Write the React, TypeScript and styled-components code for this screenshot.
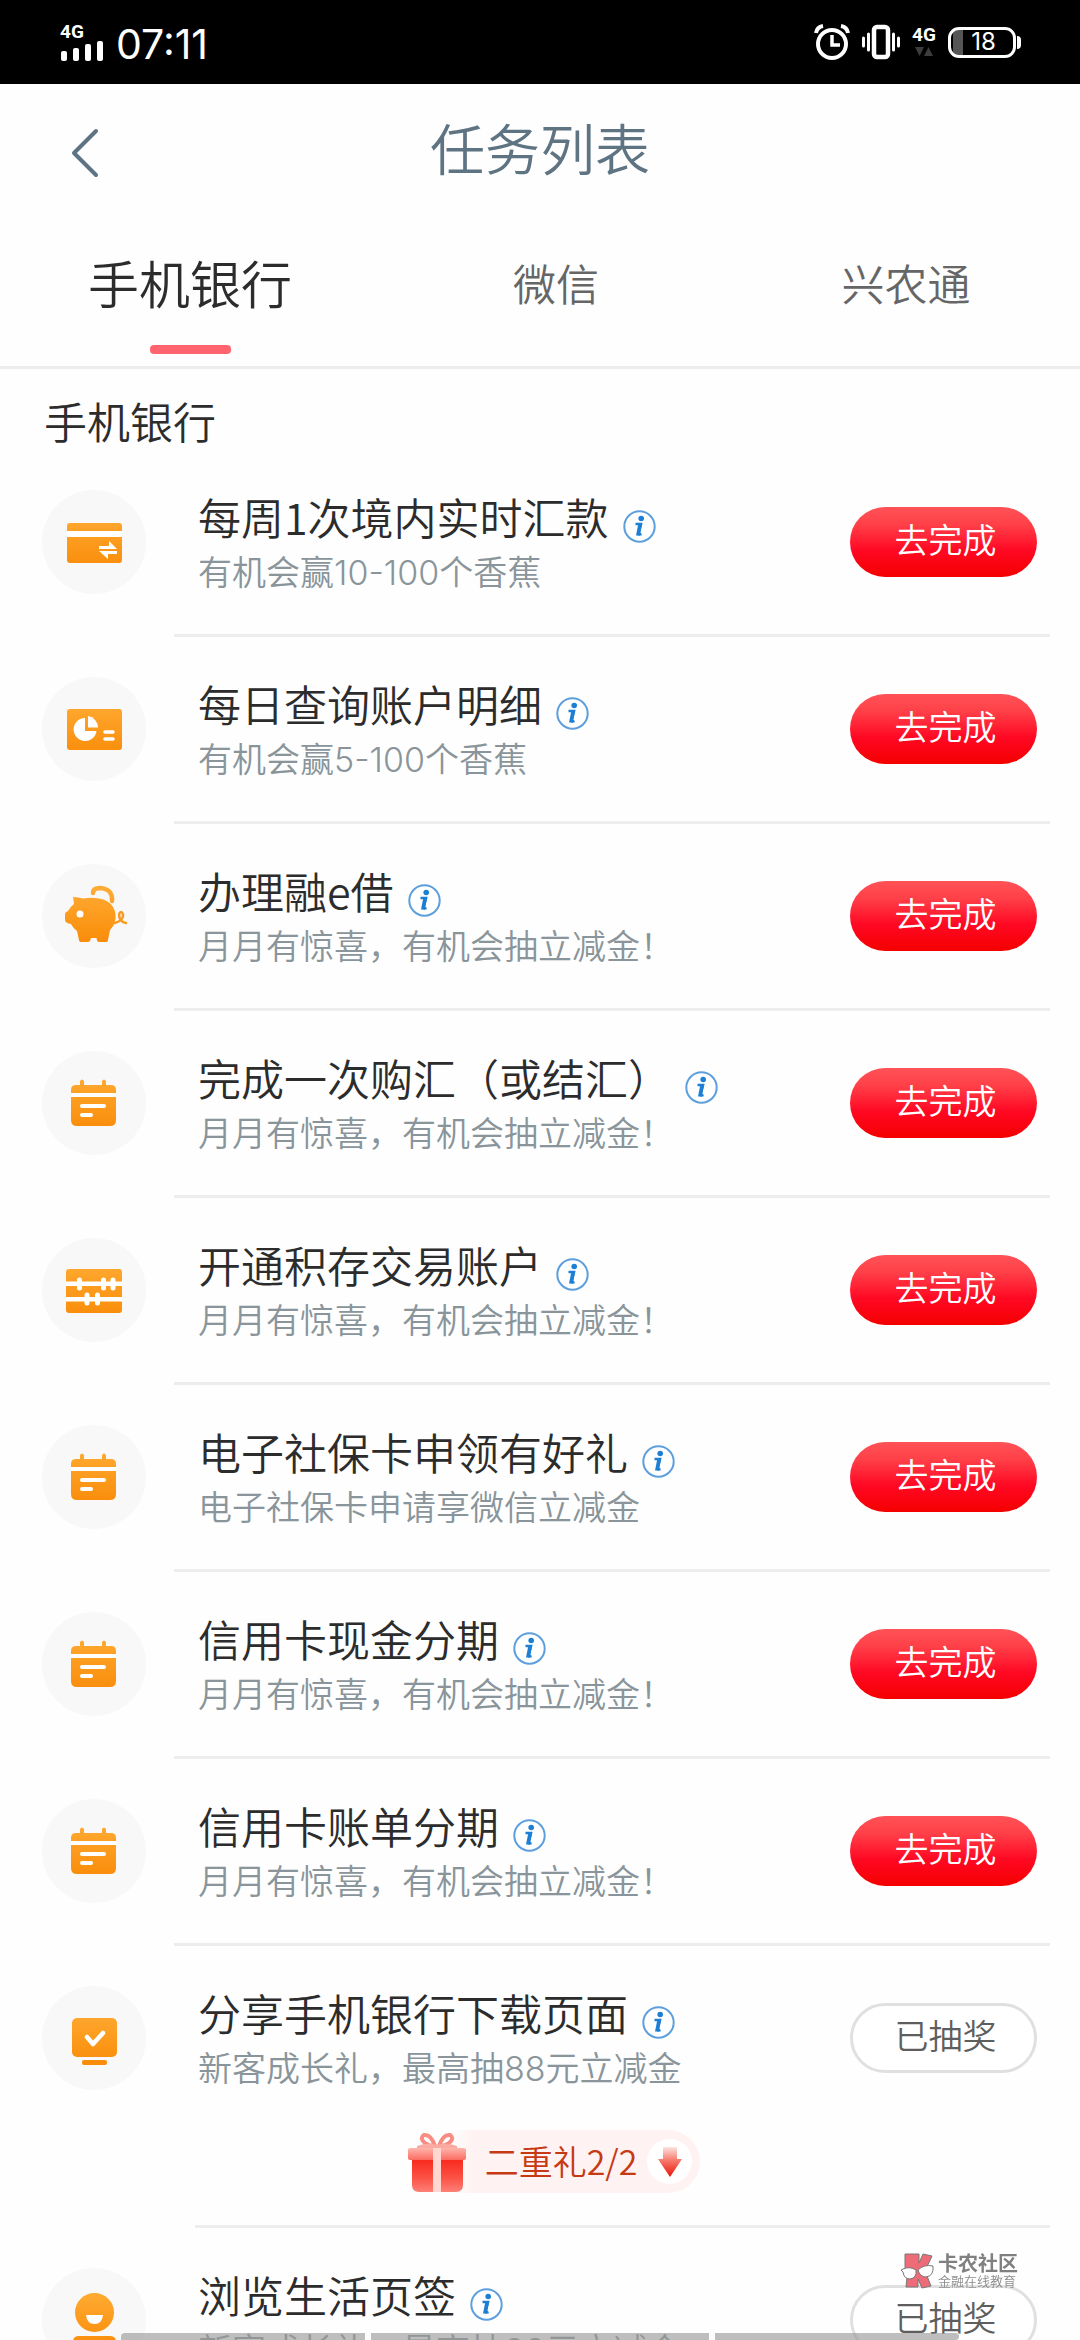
import React from "react";
import styled, { createGlobalStyle, css } from "styled-components";

const cjk = `"Noto Sans CJK SC", "Noto Sans", sans-serif`;

const GlobalStyle = createGlobalStyle`
  *, *::before, *::after { box-sizing: border-box; }
  body { margin: 0; background: #fefefe; }
  button { font: inherit; border: 0; background: none; padding: 0; cursor: pointer; }
  h1, h2, h3, p, ul { margin: 0; padding: 0; font-weight: inherit; }
  svg { display: block; flex: none; }
`;

const Screen = styled.div`
  height: 100vh;
  overflow: hidden;
  font-family: ${cjk};
  font-weight: 350;
  color: #2c2c2c;
  background: #fefefe;
`;

/* ---------- status bar ---------- */

const StatusBar = styled.div`
  display: flex;
  justify-content: space-between;
  align-items: center;
  height: 84px;
  padding: 0 59px 0 60px;
  background: #000;
  color: #fff;
`;

const StatusGroup = styled.div<{ $gap: number }>`
  display: flex;
  align-items: center;
  gap: ${(p) => p.$gap}px;
`;

const SignalColumn = styled.div`
  display: flex;
  flex-direction: column;
`;

const NetworkLabel = styled.span`
  font: 700 19px/16px Roboto, sans-serif;
`;

const Clock = styled.time`
  font: 400 41px/48px Inter, sans-serif;
  padding-top: 4px;
`;

const Battery = styled.div`
  display: flex;
  align-items: center;
  gap: 1px;
`;

const BatteryShell = styled.div`
  display: flex;
  align-items: center;
  justify-content: center;
  width: 68px;
  height: 31px;
  padding-left: 3px;
  border: 3px solid #fff;
  border-radius: 11px;
  background: linear-gradient(90deg, #000 2px, #555 2px, #555 12px, #000 12px);
  font: 400 24px/24px Inter, sans-serif;
`;

const BatteryNub = styled.div`
  width: 4px;
  height: 13px;
  border-radius: 0 4px 4px 0;
  background: #fff;
`;

/* ---------- header ---------- */

const Header = styled.header`
  display: grid;
  grid-template-columns: 170px 1fr 170px;
  align-items: center;
  height: 132px;
`;

const BackButton = styled.button`
  display: flex;
  padding: 6px 0 0 70px;
  height: 60px;
  align-items: center;
`;

const PageTitle = styled.h1`
  padding-bottom: 8px;
  font-size: 55px;
  line-height: 72px;
  text-align: center;
  color: #5f7482;
`;

const Tabs = styled.nav`
  display: grid;
  grid-template-columns: 95fr 88fr 87fr;
  height: 153px;
  border-bottom: 3px solid #ededed;
`;

const Tab = styled.button<{ $active?: boolean }>`
  display: flex;
  flex-direction: column;
  align-items: center;
  gap: 33px;
  padding-top: 36px;
  font-size: ${(p) => (p.$active ? 51 : 43)}px;
  line-height: 60px;
  color: ${(p) => (p.$active ? "#2c2c2c" : "#666")};
  &::after {
    content: "";
    width: 81px;
    height: 9px;
    border-radius: 4px;
    background: ${(p) => (p.$active ? "#ff646f" : "transparent")};
  }
`;

/* ---------- task list ---------- */

const SectionTitle = styled.h2`
  padding: 24px 44px 3px;
  font-size: 43px;
  line-height: 54px;
`;

const TaskList = styled.ul`
  list-style: none;
`;

const TaskMain = styled.div`
  display: flex;
  align-items: center;
  gap: 52px;
  height: 184px;
  padding: 0 43px 0 42px;
`;

const IconDisc = styled.div`
  flex: none;
  width: 104px;
  height: 104px;
  border-radius: 50%;
  background: #f8f8f8;
`;

const TaskText = styled.div`
  flex: 1;
  min-width: 0;
`;

const TitleLine = styled.div`
  display: flex;
  align-items: center;
  gap: 14px;
`;

const TaskTitle = styled.h3`
  font-size: 43px;
  line-height: 60px;
  white-space: nowrap;
`;

const InfoButton = styled.button`
  margin-top: 22px;
`;

const TaskNote = styled.p`
  margin-top: 1px;
  font-family: Inter, ${cjk};
  font-size: 34px;
  line-height: 52px;
  color: #89959a;
  white-space: nowrap;
`;

const ActionButton = styled.button<{ $done?: boolean }>`
  display: flex;
  flex: none;
  align-items: center;
  justify-content: center;
  width: 187px;
  height: 70px;
  padding: 0 0 6px 4px;
  border-radius: 35px;
  font-size: 34px;
  line-height: 50px;
  ${(p) =>
    p.$done
      ? css`
          color: #5e5e5e;
          border: 3px solid #e0e0e0;
          background: #fff;
        `
      : css`
          color: #fff;
          background: linear-gradient(#ff5257, #ff4048 25%, #ff0824 62%, #f40000);
        `}
`;

const Divider = styled.div<{ $inset: number }>`
  height: 3px;
  margin: 0 30px 0 ${(p) => p.$inset}px;
  background: #ededed;
`;

const BonusRow = styled.div`
  display: flex;
  justify-content: center;
  padding: 0 0 32px 28px;
`;

const BonusPill = styled.button`
  display: flex;
  align-items: center;
  height: 63px;
  padding-right: 8px;
  border-radius: 0 32px 32px 0;
  background: linear-gradient(90deg, transparent 15%, #fff2f2 22%);
  font-size: 34px;
  line-height: 60px;
  color: #c53a12;
`;

const BonusLabel = styled.span`
  padding: 0 10px 2px 19px;
`;

const BonusArrow = styled.span`
  display: grid;
  place-items: center;
  width: 45px;
  height: 45px;
  border-radius: 50%;
  background: #fff;
`;

/* ---------- overlays ---------- */

const Watermark = styled.div`
  position: fixed;
  right: 62px;
  bottom: 51px;
  display: flex;
  align-items: center;
  gap: 4px;
  color: #808080;
`;

const WatermarkName = styled.div`
  font-size: 20px;
  line-height: 20px;
  font-weight: 700;
`;

const WatermarkTag = styled.div`
  font-size: 13px;
  line-height: 16px;
  color: #8c8c8c;
`;

const NavHints = styled.div`
  position: fixed;
  left: 0;
  right: 0;
  bottom: 0;
  display: grid;
  grid-template-columns: 244fr 338fr 244fr;
  gap: 6px;
  height: 7px;
  padding: 0 121px;
`;

const NavHint = styled.div`
  background: rgba(150, 150, 150, 0.62);
  &:first-child { border-top-left-radius: 4px; }
  &:last-child { border-radius: 0 4px 4px 0; }
`;

/* ---------- drawings ---------- */

const AlarmIcon = () => (
  <svg width="36" height="36" viewBox="0 0 36 36" fill="none" stroke="#fff">
    <circle cx="18" cy="20" r="14" strokeWidth="4" />
    <path d="M2 9Q3 3 9 2M34 9Q33 3 27 2" strokeWidth="4" />
    <path d="M18 11V21H26" strokeWidth="3.5" />
  </svg>
);

const VibrateIcon = () => (
  <svg width="38" height="36" viewBox="0 0 38 36" fill="none" stroke="#fff" strokeLinecap="round">
    <rect x="12" y="3" width="14" height="30" rx="3" strokeWidth="4.5" />
    <path d="M6.500 10V26M31.500 10V26M1.500 14V22M36.500 14V22" strokeWidth="3" />
  </svg>
);

const SignalBars = () => (
  <svg width="44" height="21" viewBox="0 0 44 21" fill="#fff">
    <rect x="1" y="11" width="6" height="10" rx="2" />
    <rect x="13" y="8" width="6" height="13" rx="2" />
    <rect x="25" y="4" width="6" height="17" rx="2" />
    <rect x="37" y="1" width="6" height="20" rx="2" />
  </svg>
);

const DataArrows = () => (
  <svg width="24" height="14" viewBox="0 0 24 14" fill="#3c3c3c">
    <path d="M3 4H12L7.500 13ZM12 13H21L16.500 4Z" />
  </svg>
);

const BackIcon = () => (
  <svg width="30" height="50" viewBox="0 0 30 50" fill="none" stroke="#5f7482" strokeWidth="4" strokeLinecap="round" strokeLinejoin="round">
    <path d="M26 3L4 25L26 47" />
  </svg>
);

const InfoIcon = () => (
  <svg width="33" height="33" viewBox="0 0 33 33">
    <circle cx="16.5" cy="16.5" r="15.2" fill="#fff" stroke="#5c9fdc" strokeWidth="2" />
    <circle cx="18.2" cy="8.500" r="2.800" fill="#1c7fd4" />
    <path d="M12.500 14H18L15.600 23.500Q15.500 25 18.500 24" fill="none" stroke="#1c7fd4" strokeWidth="2.600" />
    <path d="M15.300 14H19L16.800 25.500H13Z" fill="#1c7fd4" />
  </svg>
);

const HiddenDefs = styled.svg`
  position: absolute;
`;

const OrangeDefs = () => (
  <HiddenDefs width="0" height="0" aria-hidden="true">
    <defs>
      <linearGradient id="orange" x1="0" y1="24" x2="0" y2="80" gradientUnits="userSpaceOnUse">
        <stop offset="0" stopColor="#ffab33" />
        <stop offset="1" stopColor="#f98b08" />
      </linearGradient>
      <linearGradient id="giftBody" x1="0" y1="0" x2="0" y2="1">
        <stop offset="0" stopColor="#f8281c" />
        <stop offset="0.6" stopColor="#fb5548" />
        <stop offset="1" stopColor="#fd8078" />
      </linearGradient>
      <linearGradient id="giftLid" x1="0" y1="0" x2="0" y2="1">
        <stop offset="0" stopColor="#ffb5ab" />
        <stop offset="1" stopColor="#fb6b60" />
      </linearGradient>
      <linearGradient id="arrowRed" x1="0" y1="0" x2="0" y2="1">
        <stop offset="0" stopColor="#fde3e0" />
        <stop offset="0.45" stopColor="#f7786c" />
        <stop offset="1" stopColor="#e81505" />
      </linearGradient>
    </defs>
  </HiddenDefs>
);

type IconName = "card" | "report" | "pig" | "calendar" | "abacus" | "check" | "person";

const drawings: Record<IconName, React.ReactNode> = {
  card: (
    <>
      <rect x="25" y="33" width="55" height="40" rx="3" />
      <path fill="#fff" d="M25 41H80V47H25Z" />
      <path fill="#fff" d="M57 59V56H67V51L75 59ZM75 61V64H66V69L57 61Z" />
    </>
  ),
  report: (
    <>
      <rect x="25" y="32" width="55" height="41" rx="3" />
      <path fill="#fff" d="M43 41A11.500 11.500 0 1 0 54.500 54H43Z" />
      <path fill="#fff" d="M46 39A12 12 0 0 1 56 50.500H46Z" />
      <path stroke="#fff" strokeWidth="3.500" strokeLinecap="round" d="M63 55H71M63 62H71" />
    </>
  ),
  pig: (
    <>
      <path d="M31 33Q37 33 41 34.500Q49 33 57 34.500Q67 36 71 43Q75 50 73 57Q72 62 68 66L66 76Q66 78 63 78H57Q55 78 54.500 74H49Q48 78 46 78H40Q37 78 37 76L35 67Q31 64 29 60Q23 59 23 56V50Q23 48 26 47Q28 43 32 40Z" />
      <circle cx="38" cy="50" r="3.500" fill="#fff" />
      <path fill="none" stroke="url(#orange)" strokeWidth="4.500" strokeLinecap="round" d="M51 29Q51 24 58 24Q71 25 70 37" />
      <path fill="none" stroke="#f99a22" strokeWidth="2.500" strokeLinecap="round" d="M73 59Q82 56 81 50Q79 46 77 50Q77 58 84 59" />
    </>
  ),
  calendar: (
    <>
      <path d="M38 34V30Q40 27 42 30V34H60V30Q62 27 64 30V34H69Q74 34 74 39V69Q74 75 68 75H35Q29 75 29 69V39Q29 34 34 34Z" />
      <path fill="#fff" d="M29 42H74V46H29Z" />
      <path stroke="#fff" strokeWidth="4" strokeLinecap="round" d="M40 55H62M40 64H49" />
    </>
  ),
  abacus: (
    <>
      <rect x="24" y="31" width="56" height="44" rx="3" />
      <path fill="#fff" d="M24 43.500H80V48H24ZM24 59H80V63.500H24Z" />
      <path stroke="#fff" strokeWidth="5" strokeLinecap="round" d="M37.500 42V50M61.500 42V50M71 42V50M45 57V65M55.500 57V65" />
    </>
  ),
  check: (
    <>
      <rect x="30" y="32" width="45" height="39" rx="5" />
      <rect x="40" y="74" width="25" height="5" rx="2" />
      <path fill="none" stroke="#fff" strokeWidth="4.500" strokeLinecap="round" strokeLinejoin="round" d="M45 51L51 58L61 47" />
    </>
  ),
  person: (
    <>
      <circle cx="52.500" cy="44.500" r="19.500" />
      <path fill="#fff" d="M44 47H61Q60 56 52.500 56Q45 56 44 47Z" />
      <path d="M31 80V74Q31 68 37 68H68Q74 68 74 74V80Z" />
    </>
  ),
};

const TaskIcon = ({ name }: { name: IconName }) => (
  <IconDisc>
    <svg width="104" height="104" viewBox="0 0 104 104" fill="url(#orange)" aria-hidden="true">
      {drawings[name]}
    </svg>
  </IconDisc>
);

const GiftIcon = () => (
  <svg width="58" height="60" viewBox="0 0 58 60" aria-hidden="true">
    <path fill="none" stroke="#f98d84" strokeWidth="4" d="M27 14Q23 2 16 3Q11 6 17 11Q21 14 27 14ZM31 14Q35 2 42 3Q47 6 41 11Q37 14 31 14Z" />
    <path fill="#fbaaa2" d="M9 14Q20 10 29 13Q38 10 49 14V17H9Z" />
    <path fill="url(#giftBody)" d="M4 27H55V53Q55 60 48 60H11Q4 60 4 53Z" />
    <rect x="0" y="16" width="58" height="12" rx="2" fill="url(#giftLid)" />
    <path fill="#ffd6d0" d="M25 16H33V60H25Z" />
  </svg>
);

const DownArrow = () => (
  <svg width="24" height="32" viewBox="0 0 24 32" fill="url(#arrowRed)" aria-hidden="true">
    <path d="M5 1H19V13H24L12 31L0 13H5Z" />
  </svg>
);

const KLogo = () => (
  <svg width="34" height="36" viewBox="0 0 34 36" stroke="#777" strokeWidth="1" aria-hidden="true">
    <path fill="#ee6b78" d="M5 1H19V10L23 1L32 3L25 18L31 33L22 35L18 26V34H6L7 24L5 14Z" />
    <path fill="#fff" d="M1 17L3 16Q10 13 16 17Q17 25 10 26Q4 26 3 19Z" />
    <path fill="#fff" d="M18 17Q24 11 33 13Q34 23 26 24Q20 24 18 17Z" />
  </svg>
);

/* ---------- content ---------- */

interface Task {
  icon: IconName;
  title: string;
  note: string;
  done?: boolean;
  bonus?: string;
}

const monthly = "月月有惊喜，有机会抽立减金！";

const tasks: Task[] = [
  { icon: "card", title: "每周1次境内实时汇款", note: "有机会赢10-100个香蕉" },
  { icon: "report", title: "每日查询账户明细", note: "有机会赢5-100个香蕉" },
  { icon: "pig", title: "办理融e借", note: monthly },
  { icon: "calendar", title: "完成一次购汇（或结汇）", note: monthly },
  { icon: "abacus", title: "开通积存交易账户", note: monthly },
  { icon: "calendar", title: "电子社保卡申领有好礼", note: "电子社保卡申请享微信立减金" },
  { icon: "calendar", title: "信用卡现金分期", note: monthly },
  { icon: "calendar", title: "信用卡账单分期", note: monthly },
  { icon: "check", title: "分享手机银行下载页面", note: "新客成长礼，最高抽88元立减金", done: true, bonus: "二重礼2/2" },
  { icon: "person", title: "浏览生活页签", note: "新客成长礼，最高抽88元立减金", done: true },
];

const TaskItem = ({ task }: { task: Task }) => (
  <li>
    <TaskMain>
      <TaskIcon name={task.icon} />
      <TaskText>
        <TitleLine>
          <TaskTitle>{task.title}</TaskTitle>
          <InfoButton aria-label="说明">
            <InfoIcon />
          </InfoButton>
        </TitleLine>
        <TaskNote>{task.note}</TaskNote>
      </TaskText>
      <ActionButton $done={task.done}>{task.done ? "已抽奖" : "去完成"}</ActionButton>
    </TaskMain>
    {task.bonus && (
      <BonusRow>
        <BonusPill>
          <GiftIcon />
          <BonusLabel>{task.bonus}</BonusLabel>
          <BonusArrow>
            <DownArrow />
          </BonusArrow>
        </BonusPill>
      </BonusRow>
    )}
    <Divider $inset={task.bonus ? 195 : 174} />
  </li>
);

export default function App() {
  return (
    <Screen lang="zh-CN">
      <GlobalStyle />
      <OrangeDefs />
      <StatusBar>
        <StatusGroup $gap={12}>
          <SignalColumn>
            <NetworkLabel>4G</NetworkLabel>
            <SignalBars />
          </SignalColumn>
          <Clock>07:11</Clock>
        </StatusGroup>
        <StatusGroup $gap={12}>
          <AlarmIcon />
          <VibrateIcon />
          <SignalColumn>
            <NetworkLabel>4G</NetworkLabel>
            <DataArrows />
          </SignalColumn>
          <Battery>
            <BatteryShell>18</BatteryShell>
            <BatteryNub />
          </Battery>
        </StatusGroup>
      </StatusBar>
      <Header>
        <BackButton aria-label="返回">
          <BackIcon />
        </BackButton>
        <PageTitle>任务列表</PageTitle>
      </Header>
      <Tabs>
        <Tab $active>手机银行</Tab>
        <Tab>微信</Tab>
        <Tab>兴农通</Tab>
      </Tabs>
      <main>
        <SectionTitle>手机银行</SectionTitle>
        <TaskList>
          {tasks.map((task) => (
            <TaskItem key={task.title} task={task} />
          ))}
        </TaskList>
      </main>
      <Watermark>
        <KLogo />
        <div>
          <WatermarkName>卡农社区</WatermarkName>
          <WatermarkTag>金融在线教育</WatermarkTag>
        </div>
      </Watermark>
      <NavHints>
        <NavHint />
        <NavHint />
        <NavHint />
      </NavHints>
    </Screen>
  );
}
